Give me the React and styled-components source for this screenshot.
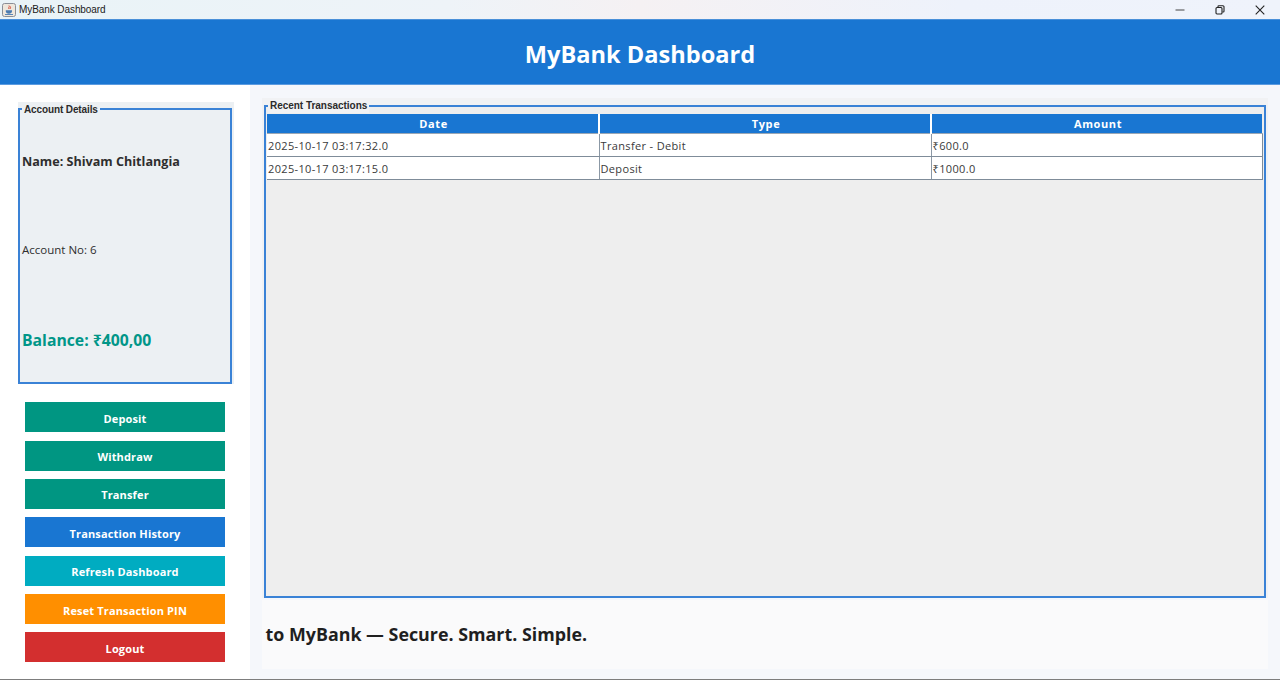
import React from "react";
import styled, { createGlobalStyle } from "styled-components";

const Global = createGlobalStyle`
  html, body { margin: 0; padding: 0; height: 100%; background: #f5f7fb; }
  #root { height: 680px; overflow: hidden; }
  * { box-sizing: border-box; }
`;

const Page = styled.div`
  width: 1280px; height: 680px; display: flex; flex-direction: column;
  font-family: "Open Sans", "Noto Sans", sans-serif; border-bottom: 1px solid #7d7d7d;
`;
const TitleBar = styled.div`
  height: 19px; flex: none; display: flex; align-items: center; justify-content: space-between;
  background: linear-gradient(90deg, #e9f3f7 0%, #eef3f8 35%, #f5f1f3 50%, #eef2fb 75%, #eff3fb 100%);
`;
const WindowTitle = styled.div`
  display: flex; align-items: center; gap: 3px; padding-left: 2px;
  font: 10px "Liberation Sans", Arial, sans-serif; letter-spacing: -0.08px; color: #1a1a1a;
`;
const WindowControls = styled.div`display: flex; align-items: center;`;
const ControlButton = styled.div`
  width: 40px; height: 19px; display: flex; align-items: center; justify-content: center;
`;
const Header = styled.header`
  height: 66px; flex: none; background: #1976d2; display: flex; align-items: center; justify-content: center;
  padding-top: 6px; border-top: 1px solid #4a90d9; border-bottom: 1px solid #5b9be0;
`;
const HeaderTitle = styled.h1`
  margin: 0; color: #fff; font-size: 23.6px; font-weight: 700; line-height: 1;
`;
const Body = styled.div`flex: 1; display: flex; min-height: 0;`;
const Sidebar = styled.aside`
  width: 250px; flex: none; background: #fff; padding: 17px 16px 0 18px; display: flex; flex-direction: column;
`;
const DetailsPanel = styled.div`
  height: 282px; flex: none; background: #ecf0f3; padding-right: 2px; display: flex;
`;
const Group = styled.fieldset`
  margin: 0; min-width: 0; flex: 1; display: flex; flex-direction: column;
  border: 2px solid #3a82d6; padding: 0;
`;
const GroupLabel = styled.legend`
  font: bold 10px/12px "Liberation Sans", Arial, sans-serif; letter-spacing: -0.12px; color: #2b2b2b;
  margin-left: 2px; padding: 2px 2px 0;
`;
const DetailRows = styled.div`
  flex: 1; display: grid; grid-template-rows: repeat(3, 1fr); padding: 0 0 0 2px;
`;
const DetailRow = styled.div`
  display: flex; align-items: center; padding-top: ${p => p.$pt || 0}px;
  font-size: ${p => p.$size}px; font-weight: ${p => p.$weight}; color: ${p => p.$color || "#2e2e2e"};
`;
const Actions = styled.div`
  display: flex; flex-direction: column; gap: 8.35px; margin: 18.3px 9px 0 7px;
`;
const ActionButton = styled.button`
  height: 30px; width: 200px; border: 0; padding: 2px 0 0; background: ${p => p.$bg}; color: #fff;
  font-family: inherit; font-size: 11px; font-weight: 700; letter-spacing: 0.15px;
`;
const Main = styled.main`
  flex: 1; min-width: 0; background: #f5f7fb; padding: 13px 12px 0 12px; display: flex; flex-direction: column;
`;
const TransactionsPanel = styled.div`
  height: 500px; flex: none; background: #f1f2f4; padding: 0 2px; display: flex;
`;
const TransactionsGroup = styled(Group)`
  background: #eeeeee; padding: 0 0 0 1px;
`;
const TransactionsLabel = styled(GroupLabel)`
  margin-left: 1px; padding-top: 1px; line-height: 14px; letter-spacing: -0.03px; background: #f1f2f4;
`;
const Table = styled.table`
  width: 995px; border-collapse: collapse; table-layout: fixed; font-size: 11px; color: #3a3a3a;
  margin: 1px 0 0 0;
`;
const HeadCell = styled.th`
  height: 19px; padding: 0 0 0 2px; background: #1976d2; color: #fff; font-size: 11px; font-weight: 700;
  letter-spacing: 0.6px; border-right: 2px solid #fff; border-bottom: 1px solid #9aa7b5;
  &:last-child { border-right: 0; }
`;
const Cell = styled.td`
  height: 23px; padding: 1px 0 0 1px; background: #fff; border-right: 1px solid #8b98a5; border-bottom: 1.5px solid #7f8c99;
  letter-spacing: 0.35px; white-space: nowrap;
  &:last-child { border-right: 1px solid #7f8c99; }
`;
const Footer = styled.div`
  height: 69px; flex: none; margin-top: 2px; background: #fafafb; display: flex; align-items: center;
  padding: 0 0 2px 3.5px; font-size: 17.85px; font-weight: 700; color: #1f1f1f;
`;

const JavaIcon = () => (
  <svg width="14" height="14" viewBox="0 0 14 14">
    <rect x="0.5" y="0.5" width="13" height="13" rx="2" fill="#eee7dc" stroke="#8a8f96" />
    <path d="M7 2.5c1 1.2-1 2 0 3.5M8.5 3.5c.6 1-.8 1.5 0 2.5" stroke="#d2402b" strokeWidth="0.9" fill="none" />
    <path d="M3.8 7.2h6.2v1.1c0 1.5-1.3 2.4-3.1 2.4s-3.1-.9-3.1-2.4z" fill="#4a7bb0" />
    <path d="M3 11.5h8" stroke="#4a7bb0" strokeWidth="0.9" />
  </svg>
);

const buttons = [
  ["Deposit", "#009682"],
  ["Withdraw", "#009682"],
  ["Transfer", "#009682"],
  ["Transaction History", "#1976d2"],
  ["Refresh Dashboard", "#00acc1"],
  ["Reset Transaction PIN", "#ff8f00"],
  ["Logout", "#d32f2f"],
];

const rows = [
  ["2025-10-17 03:17:32.0", "Transfer - Debit", "₹600.0"],
  ["2025-10-17 03:17:15.0", "Deposit", "₹1000.0"],
];

export default function App() {
  return (
    <Page>
      <Global />
      <TitleBar>
        <WindowTitle><JavaIcon />MyBank Dashboard</WindowTitle>
        <WindowControls>
          <ControlButton>
            <svg width="10" height="10" viewBox="0 0 10 10"><path d="M0.5 5h9" stroke="#444" strokeWidth="1" /></svg>
          </ControlButton>
          <ControlButton>
            <svg width="10" height="10" viewBox="0 0 10 10" fill="none" stroke="#222" strokeWidth="1.1"><rect x="1" y="2.5" width="6" height="6.5" rx="1" /><path d="M3 2.3V1.6a.8.8 0 0 1 .8-.8H8a1 1 0 0 1 1 1v4.4a.8.8 0 0 1-.8.8H7.4" /></svg>
          </ControlButton>
          <ControlButton>
            <svg width="10" height="10" viewBox="0 0 10 10"><path d="M0.7 0.7l8.6 8.6M9.3 0.7l-8.6 8.6" stroke="#222" strokeWidth="1.1" /></svg>
          </ControlButton>
        </WindowControls>
      </TitleBar>
      <Header><HeaderTitle>MyBank Dashboard</HeaderTitle></Header>
      <Body>
        <Sidebar>
          <DetailsPanel>
            <Group>
              <GroupLabel>Account Details</GroupLabel>
              <DetailRows>
                <DetailRow $size={12.6} $weight={700} $pt={3}>Name: Shivam Chitlangia</DetailRow>
                <DetailRow $size={11.5} $weight={400} $pt={2}>Account No: 6</DetailRow>
                <DetailRow $size={15.75} $weight={700} $color="#009688" $pt={4}>Balance: ₹400,00</DetailRow>
              </DetailRows>
            </Group>
          </DetailsPanel>
          <Actions>
            {buttons.map(([label, bg]) => (
              <ActionButton key={label} $bg={bg}>{label}</ActionButton>
            ))}
          </Actions>
        </Sidebar>
        <Main>
          <TransactionsPanel>
            <TransactionsGroup>
              <TransactionsLabel>Recent Transactions</TransactionsLabel>
              <Table>
                <colgroup><col style={{ width: 332 }} /><col style={{ width: 332 }} /><col style={{ width: 331 }} /></colgroup>
                <thead>
                  <tr><HeadCell>Date</HeadCell><HeadCell>Type</HeadCell><HeadCell>Amount</HeadCell></tr>
                </thead>
                <tbody>
                  {rows.map(r => (
                    <tr key={r[0]}>{r.map(c => <Cell key={c}>{c}</Cell>)}</tr>
                  ))}
                </tbody>
              </Table>
            </TransactionsGroup>
          </TransactionsPanel>
          <Footer>to MyBank — Secure. Smart. Simple.</Footer>
        </Main>
      </Body>
    </Page>
  );
}
